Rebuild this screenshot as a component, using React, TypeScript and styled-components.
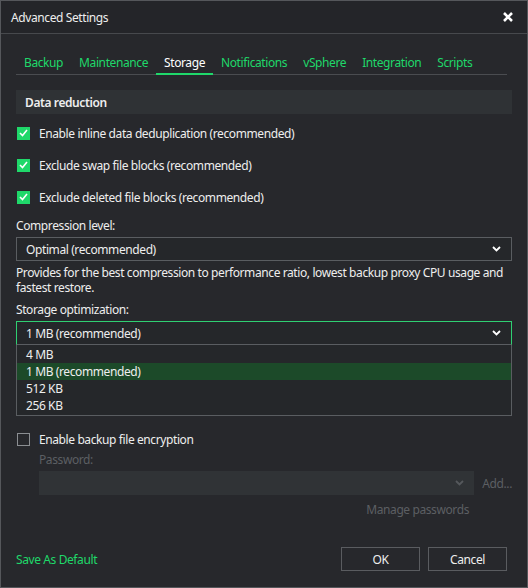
import React from 'react';
import styled, { createGlobalStyle, css } from 'styled-components';

const green = '#1fd86a';
const text = '#eeeeee';
const dim = '#5c5f63';

const GlobalStyle = createGlobalStyle`
  html, body {
    margin: 0;
    padding: 0;
    background: #27282c;
  }
  body {
    font-family: 'Noto Sans', 'Open Sans', sans-serif;
    font-size: 12px;
    letter-spacing: -0.4px;
    color: ${text};
  }
`;

const Window = styled.div`
  width: 528px;
  height: 588px;
  box-sizing: border-box;
  border: 1px solid #55575b;
  background: #27282c;
  display: flex;
  flex-direction: column;
`;

const TitleBar = styled.div`
  height: 32px;
  flex: none;
  display: flex;
  align-items: center;
  justify-content: space-between;
  padding: 0 14px 0 10px;
  background: #242529;
  border-bottom: 1px solid #47494d;
`;

const CloseButton = styled.span`
  display: flex;
  align-items: center;
`;

const Body = styled.div`
  flex: 1;
  display: flex;
  flex-direction: column;
  padding: 0 15px;
`;

const TabBar = styled.div`
  display: flex;
  margin-top: 19px;
  margin-right: 5px;
  border-bottom: 1px solid #4a4c50;
`;

const Tab = styled.div<{ $active?: boolean }>`
  padding: 0 8px;
  height: 20px;
  line-height: 19px;
  color: ${(p) => (p.$active ? '#ffffff' : green)};
  border-bottom: 2px solid ${(p) => (p.$active ? green : 'transparent')};
  margin-bottom: -1px;
`;

const SectionHeader = styled.div`
  margin-top: 15px;
  margin-bottom: 3px;
  height: 24px;
  display: flex;
  align-items: center;
  padding-left: 9px;
  background: #2f3235;
  font-weight: 600;
`;

const CheckRow = styled.div<{ $gap?: number }>`
  height: 32px;
  margin-top: ${(p) => p.$gap ?? 0}px;
  display: flex;
  align-items: center;
  gap: 9px;
  padding-left: 1px;
`;

const Box = styled.span<{ $checked?: boolean }>`
  width: 13px;
  height: 13px;
  box-sizing: border-box;
  display: flex;
  align-items: center;
  justify-content: center;
  ${(p) =>
    p.$checked
      ? css`
          background: ${green};
        `
      : css`
          border: 1px solid #8b8e92;
        `}
`;

const FieldLabel = styled.div<{ $gap?: number; $dim?: boolean; $indent?: number }>`
  margin-top: ${(p) => p.$gap ?? 0}px;
  margin-left: ${(p) => p.$indent ?? 0}px;
  height: 16px;
  line-height: 16px;
  color: ${(p) => (p.$dim ? dim : text)};
`;

const Select = styled.div<{ $focused?: boolean; $open?: boolean }>`
  margin-top: 3px;
  height: 24px;
  box-sizing: border-box;
  display: flex;
  align-items: center;
  justify-content: space-between;
  padding: 0 10px 0 9px;
  background: #25272a;
  border: 1px solid ${(p) => (p.$focused ? '#2fcf72' : '#5a5d61')};
  ${(p) =>
    p.$open &&
    css`
      border-bottom-color: #5a5d61;
    `}
`;

const DisabledSelect = styled.div`
  flex: 1;
  height: 24px;
  display: flex;
  align-items: center;
  justify-content: flex-end;
  padding-right: 10px;
  background: #303336;
`;

const Description = styled.div`
  margin-top: 4px;
  line-height: 15px;
`;

const DropWrap = styled.div`
  position: relative;
`;

const DropList = styled.div`
  position: absolute;
  left: 0;
  right: 0;
  top: 0;
  box-sizing: border-box;
  border: 1px solid #5a5d61;
  border-top: none;
  background: #25272a;
  padding: 1px 0 1px;
  z-index: 2;
`;

const Option = styled.div<{ $selected?: boolean }>`
  height: 17px;
  line-height: 17px;
  padding-left: 9px;
  background: ${(p) => (p.$selected ? '#1c4a29' : 'transparent')};
`;

const PasswordRow = styled.div`
  margin-top: 3px;
  margin-left: 23px;
  display: flex;
  align-items: center;
  gap: 8px;
`;

const DimText = styled.span`
  color: ${dim};
`;

const ManageRow = styled.div`
  margin-top: 6px;
  margin-right: 43px;
  display: flex;
  justify-content: flex-end;
  color: ${dim};
`;

const Footer = styled.div`
  margin-top: auto;
  margin-bottom: 16px;
  display: flex;
  align-items: center;
  justify-content: space-between;
  padding-right: 5px;
`;

const LinkText = styled.span`
  color: ${green};
`;

const Buttons = styled.div`
  display: flex;
  gap: 8px;
`;

const Button = styled.div`
  width: 79px;
  height: 24px;
  box-sizing: border-box;
  border: 1px solid #5a5c60;
  display: flex;
  align-items: center;
  justify-content: center;
  color: ${text};
`;

const Chevron = ({ color = '#ffffff' }: { color?: string }) => (
  <svg width="9" height="6" viewBox="0 0 9 6">
    <polyline points="1,1 4.5,4.5 8,1" fill="none" stroke={color} strokeWidth="1.8" />
  </svg>
);

const Check = () => (
  <svg width="9" height="8" viewBox="0 0 9 8">
    <polyline points="1,4 3.5,6.5 8,1" fill="none" stroke="#ffffff" strokeWidth="1.6" />
  </svg>
);

const tabs = ['Backup', 'Maintenance', 'Storage', 'Notifications', 'vSphere', 'Integration', 'Scripts'];

const dedupeOptions = [
  'Enable inline data deduplication (recommended)',
  'Exclude swap file blocks (recommended)',
  'Exclude deleted file blocks (recommended)',
];

const blockSizes = ['4 MB', '1 MB (recommended)', '512 KB', '256 KB'];

export default function App() {
  return (
    <>
      <GlobalStyle />
      <Window>
        <TitleBar>
          <span>Advanced Settings</span>
          <CloseButton>
            <svg width="10" height="10" viewBox="0 0 10 10">
              <path d="M1 1 L9 9 M9 1 L1 9" stroke="#ffffff" strokeWidth="2.6" />
            </svg>
          </CloseButton>
        </TitleBar>
        <Body>
          <TabBar>
            {tabs.map((t) => (
              <Tab key={t} $active={t === 'Storage'}>
                {t}
              </Tab>
            ))}
          </TabBar>

          <SectionHeader>Data reduction</SectionHeader>
          {dedupeOptions.map((o) => (
            <CheckRow key={o}>
              <Box $checked>
                <Check />
              </Box>
              <span>{o}</span>
            </CheckRow>
          ))}

          <FieldLabel $gap={5}>Compression level:</FieldLabel>
          <Select>
            <span>Optimal (recommended)</span>
            <Chevron />
          </Select>
          <Description>
            Provides for the best compression to performance ratio, lowest backup proxy CPU usage and fastest restore.
          </Description>

          <FieldLabel $gap={7}>Storage optimization:</FieldLabel>
          <Select $focused $open>
            <span>1 MB (recommended)</span>
            <Chevron />
          </Select>
          <DropWrap>
            <DropList>
              {blockSizes.map((s) => (
                <Option key={s} $selected={s === '1 MB (recommended)'}>
                  {s}
                </Option>
              ))}
            </DropList>
          </DropWrap>

          <CheckRow $gap={78}>
            <Box />
            <span>Enable backup file encryption</span>
          </CheckRow>
          <FieldLabel $dim $indent={23} $gap={-3}>
            Password:
          </FieldLabel>
          <PasswordRow>
            <DisabledSelect>
              <Chevron color="#55585c" />
            </DisabledSelect>
            <DimText>Add...</DimText>
          </PasswordRow>
          <ManageRow>Manage passwords</ManageRow>

          <Footer>
            <LinkText>Save As Default</LinkText>
            <Buttons>
              <Button>OK</Button>
              <Button>Cancel</Button>
            </Buttons>
          </Footer>
        </Body>
      </Window>
    </>
  );
}
